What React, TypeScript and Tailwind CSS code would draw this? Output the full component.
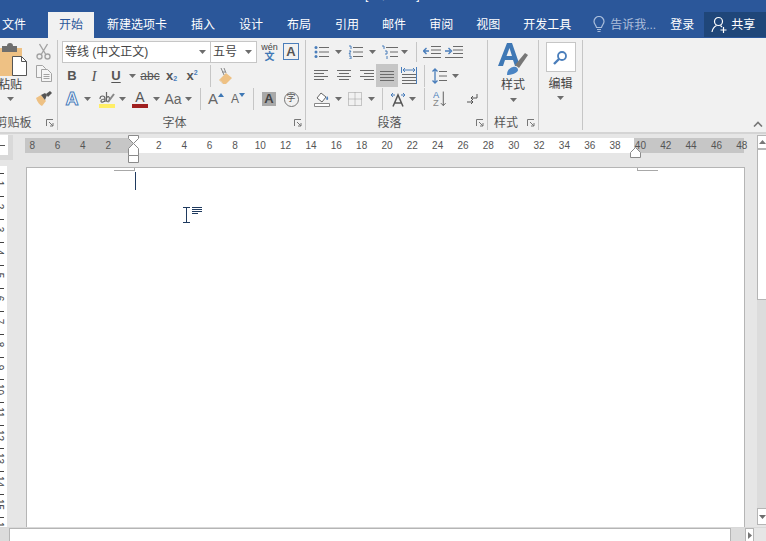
import type { ReactNode } from 'react';

const BLUE = '#4a7ebb';
const GRAY = '#6b6b6b';

function Caret({ className = '' }: { className?: string }) {
  return (
    <svg width="7" height="4" viewBox="0 0 7 4" className={className}>
      <path d="M0 0h7L3.500 4z" fill="#6d6d6d" />
    </svg>
  );
}

function C({ className = '', children }: { className?: string; children?: ReactNode }) {
  return <div className={`flex items-center justify-center shrink-0 ${className}`}>{children}</div>;
}

function Sep({ className = '' }: { className?: string }) {
  return <div className={`w-px bg-[#c6c6c6] shrink-0 ${className}`} />;
}

function Launcher() {
  return (
    <div className="w-[14px] flex items-center justify-center shrink-0">
      <svg width="8" height="8" viewBox="0 0 8 8" fill="none" stroke="#777">
        <path d="M.5 7V.5H7" />
        <path d="M3 3l4 4M7 4v3H4" />
      </svg>
    </div>
  );
}

function GroupLabel({ children }: { children: ReactNode }) {
  return (
    <div className="mt-auto h-[19px] flex items-center">
      <div className="flex-1 text-center text-[12px] leading-[16px] text-[#555] whitespace-nowrap">{children}</div>
      <Launcher />
    </div>
  );
}

function Lines({ d, w = 16, h = 14, children }: { d: string; w?: number; h?: number; children?: ReactNode }) {
  return (
    <svg width={w} height={h} viewBox={`0 0 ${w} ${h}`} fill="none">
      <path d={d} stroke={GRAY} />
      {children}
    </svg>
  );
}

function Tabs() {
  return (
    <div className="h-[26px] flex items-start text-[12px] leading-[26px] text-white whitespace-nowrap">
      <div className="ml-[2px]">文件</div>
      <div className="ml-[22px] h-[26px] px-[11px] bg-[#f1f1f1] text-[#2b579a]">开始</div>
      <div className="ml-[13px] flex gap-[24px]">
        <div>新建选项卡</div>
        <div>插入</div>
        <div>设计</div>
        <div>布局</div>
        <div>引用</div>
        <div className="-ml-px">邮件</div>
        <div className="-ml-px">审阅</div>
        <div className="-ml-px">视图</div>
        <div className="-ml-px">开发工具</div>
      </div>
      <div className="ml-[22px] h-[24px] flex items-center">
        <svg width="12" height="17" viewBox="0 0 12 17" fill="none" stroke="#a9bddb" strokeWidth="1.2">
          <path d="M3.500 11.500C3 9 1 8 1 5.500a5 5 0 0 1 10 0C11 8 9 9 8.500 11.500z" />
          <path d="M4 13.500h4M4.500 15.500h3" />
        </svg>
      </div>
      <div className="ml-[5px] text-[#aebfdb] w-[46px]">告诉我...</div>
      <div className="ml-[14px]">登录</div>
      <div className="ml-[10px] h-[25px] w-[62px] bg-[#1f4679] flex items-center">
        <svg width="17" height="17" viewBox="0 0 17 17" fill="none" stroke="#fff" strokeWidth="1.2" className="ml-[7px]">
          <circle cx="7.500" cy="5.500" r="4" />
          <path d="M1 16c.5-3 2.500-5.500 4.500-6.500M9.500 9.500l1.500 1.500M12.500 11v6M9.500 14h6" />
        </svg>
        <span className="ml-[3px]">共享</span>
      </div>
    </div>
  );
}

function Clipboard() {
  return (
    <div className="-ml-[16px] w-[73px] shrink-0 flex flex-col pt-[3px]">
      <div className="flex">
        <div className="w-[52px] flex flex-col items-center shrink-0">
          <svg width="52" height="34" viewBox="0 0 52 34" className="mt-[2px]">
            <path d="M16 5h22v28H16z" fill="#eec184" />
            <path d="M18 3h5a3 3 0 0 1 6 0h4v6H18z" fill="#6e6e6e" />
            <path d="M28.500 13.500h9l5 5v14h-14z" fill="#fff" stroke="#555" />
            <path d="M37.500 13.500v5h5" fill="none" stroke="#555" />
          </svg>
          <div className="mt-[1px] text-[12px] leading-[14px] text-[#444] whitespace-nowrap">粘贴</div>
          <Caret className="mt-[5px]" />
        </div>
        <div className="w-[15px] shrink-0 flex flex-col items-center">
          <svg width="15" height="17" viewBox="0 0 15 17" fill="none" stroke="#a3a3a3" strokeWidth="1.4" className="mt-[2px]">
            <path d="M3.500 1l6 10M11.500 1l-6 10" />
            <circle cx="3.500" cy="13.500" r="2.500" />
            <circle cx="11.500" cy="13.500" r="2.500" />
          </svg>
          <svg width="16" height="17" viewBox="0 0 16 17" fill="#f5f5f5" stroke="#a3a3a3" className="mt-[5px]">
            <path d="M.5.500h6l3 3v9h-9z" />
            <path d="M5.500 4.500h6l4 4v8h-10z" />
            <path d="M7.500 9.500h6M7.500 11.500h6M7.500 13.500h6" />
          </svg>
          <svg width="16" height="15" viewBox="0 0 16 15" className="mt-[9px]">
            <path d="M0 7l5-3 5 6-4 5C4 14 1 11 0 7z" fill="#eec184" />
            <path d="M5 4l4-2 2 2-2 5z" fill="#555" />
            <path d="M10 3l4-3 2 2-4 4z" fill="#555" />
          </svg>
        </div>
      </div>
      <div className="mt-auto h-[19px] flex items-center">
        <div className="w-[59px] text-center text-[12px] leading-[16px] text-[#555] whitespace-nowrap">剪贴板</div>
        <Launcher />
      </div>
    </div>
  );
}

function FontGroup() {
  return (
    <div className="w-[247px] shrink-0 flex flex-col pt-[3px] text-[#555]">
      <div className="h-[22px] flex">
        <div className="ml-[4px] w-[149px] h-[22px] bg-white border border-[#c6c6c6] flex items-center pl-[2px] pr-[4px] text-[12px] text-[#444] whitespace-nowrap">
          <span className="flex-1">等线 (中文正文)</span>
          <Caret />
        </div>
        <div className="-ml-px w-[47px] h-[22px] bg-white border border-[#c6c6c6] flex items-center pl-[2px] pr-[4px] text-[12px] text-[#444] whitespace-nowrap">
          <span className="flex-1">五号</span>
          <Caret />
        </div>
        <C className="ml-[1px] w-[23px] flex-col leading-none">
          <span className="text-[9px] leading-[9px] text-[#444]">wén</span>
          <span className="text-[10px] leading-[10px] text-[#3f78b5] font-bold">文</span>
        </C>
        <C className="ml-[2px] mt-[2px] w-[16px] h-[17px] border border-[#4a7ebb] text-[13px] font-bold text-[#555]">A</C>
      </div>
      <div className="mt-[3px] h-[20px] flex items-center text-[13px] font-bold">
        <C className="ml-[3px] w-[22px]">B</C>
        <C className="w-[22px] italic font-normal font-['Liberation_Serif'] text-[15px]">I</C>
        <C className="w-[22px] underline underline-offset-2">U</C>
        <C className="w-[10px]"><Caret /></C>
        <C className="ml-[1px] w-[24px] text-[12px] font-normal line-through">abc</C>
        <C className="w-[19px]">x<span className="text-[7px] text-[#4a7ebb] mt-[6px]">2</span></C>
        <C className="ml-[1px] w-[20px]">x<span className="text-[7px] text-[#4a7ebb] -mt-[6px]">2</span></C>
        <Sep className="ml-[8px] h-[22px]" />
        <C className="ml-[4px] w-[22px]">
          <svg width="16" height="18" viewBox="0 0 16 18">
            <path d="M1 13l7-7 6 5-6 6H5z" fill="#eec184" />
            <path d="M2 12l3 5H4z" fill="#ddd" />
            <path d="M3 1l3 7M6 1l2 5M4 5h3" stroke="#888" fill="none" />
          </svg>
        </C>
      </div>
      <div className="mt-[1px] h-[24px] flex items-center">
        <C className="ml-[3px] w-[22px] text-[18px] font-bold text-[#fff] [-webkit-text-stroke:1px_#4a7ebb]">A</C>
        <C className="w-[9px]"><Caret /></C>
        <C className="ml-[3px] w-[23px]">
          <div className="flex flex-col items-center">
            <svg width="16" height="13" viewBox="0 0 16 13" fill="none" stroke="#666" strokeWidth="1.2">
              <path d="M1 8c0-2 1-3 2.500-3S6 6 6 8v3M6 8c-2 0-4 0-4 2s3 1 4-.5" />
              <path d="M7.500 1v9c1 1 3 1 3-2s-2-3-3-1" />
              <path d="M9 11l6-8" stroke="#888" strokeWidth="2" />
            </svg>
            <div className="w-[16px] h-[4px] bg-[#ffee66]" />
          </div>
        </C>
        <C className="w-[9px]"><Caret /></C>
        <C className="ml-[2px] w-[22px]">
          <div className="flex flex-col items-center">
            <span className="text-[14px] leading-[13px] text-[#555]">A</span>
            <div className="w-[16px] h-[4px] bg-[#a02020]" />
          </div>
        </C>
        <C className="w-[10px]"><Caret /></C>
        <C className="ml-[1px] w-[22px] text-[14px] text-[#666]">Aa</C>
        <C className="w-[9px]"><Caret /></C>
        <Sep className="ml-[7px] h-[22px]" />
        <C className="ml-[4px] w-[22px] text-[15px] text-[#666]">A<Tri dir="up" /></C>
        <C className="w-[22px] text-[12px] text-[#666]">A<Tri dir="down" /></C>
        <Sep className="ml-[4px] h-[22px]" />
        <C className="ml-[4px] w-[22px]">
          <div className="w-[14px] h-[14px] bg-[#a9a9a9] flex items-center justify-center text-[13px] font-bold text-[#444]">A</div>
        </C>
        <C className="w-[22px]">
          <div className="w-[15px] h-[15px] rounded-full border border-[#777] flex items-center justify-center text-[9px] text-[#555]">字</div>
        </C>
      </div>
      <GroupLabel>字体</GroupLabel>
    </div>
  );
}

function Tri({ dir }: { dir: 'up' | 'down' }) {
  return (
    <svg width="6" height="4" viewBox="0 0 6 4" className="-mt-[9px]">
      <path d={dir === 'up' ? 'M3 0l3 4H0z' : 'M0 0h6L3 4z'} fill="#3f78b5" />
    </svg>
  );
}

function ParagraphGroup() {
  const rows = 'M0 1.500h14M0 4.500h10M0 7.500h14M0 10.500h10';
  return (
    <div className="w-[181px] shrink-0 flex flex-col pt-[3px]">
      <div className="h-[22px] flex items-center">
        <C className="ml-[8px] w-[15px]">
          <Lines w={15} d="M5 2.500h10M5 7h10M5 11.500h10">
            <circle cx="2" cy="2.500" r="1.500" fill={BLUE} />
            <circle cx="2" cy="7" r="1.500" fill={BLUE} />
            <circle cx="2" cy="11.500" r="1.500" fill={BLUE} />
          </Lines>
        </C>
        <C className="ml-[4px] w-[10px]"><Caret /></C>
        <C className="ml-[5px] w-[15px]">
          <Lines w={15} d="M5 2.500h10M5 7h10M5 11.500h10">
            <path d="M1 1h2v3M1 6h2l-2 3h2M1 11h2v3H1" stroke={BLUE} />
          </Lines>
        </C>
        <C className="ml-[4px] w-[10px]"><Caret /></C>
        <C className="ml-[4px] w-[17px]">
          <Lines w={17} d="M5 2.500h12M9 7h8M9 11.500h8">
            <path d="M1 1h2v3M4 6h2v3H4M6 11v3" stroke={BLUE} />
          </Lines>
        </C>
        <C className="ml-[1px] w-[10px]"><Caret /></C>
        <Sep className="ml-[7px] h-[20px]" />
        <C className="ml-[6px] w-[18px]">
          <Lines w={18} d="M8 1.500h10M8 5h10M8 8.500h10M0 12.500h18">
            <path d="M6 6H1M3.500 3L.5 6l3 3" stroke={BLUE} strokeWidth="1.400" />
          </Lines>
        </C>
        <C className="ml-[4px] w-[18px]">
          <Lines w={18} d="M8 1.500h10M8 5h10M8 8.500h10M0 12.500h18">
            <path d="M0 6h5M3.500 3l3 3-3 3" stroke={BLUE} strokeWidth="1.400" />
          </Lines>
        </C>
      </div>
      <div className="mt-[1px] h-[23px] flex items-center">
        <C className="ml-[8px] w-[16px]"><Lines d={rows} /></C>
        <C className="ml-[6px] w-[16px]"><Lines d="M1 1.500h14M3 4.500h10M1 7.500h14M3 10.500h10" /></C>
        <C className="ml-[6px] w-[16px]"><Lines d="M2 1.500h14M6 4.500h10M2 7.500h14M6 10.500h10" /></C>
        <C className="ml-[2px] w-[22px] h-[23px] bg-[#c6c6c6]"><Lines d="M1 2.500h14M1 5.500h14M1 8.500h14M1 11.500h14" /></C>
        <C className="ml-[3px] w-[16px]">
          <svg width="16" height="18" viewBox="0 0 16 18" fill="none">
            <path d="M1 7.500h14M1 10.500h14M1 13.500h14M1 16.500h14" stroke={GRAY} />
            <path d="M.5 0v6M15.500 0v17M2 3h12M2 3l2-2M2 3l2 2M14 3l-2-2M14 3l-2 2" stroke={BLUE} />
          </svg>
        </C>
        <Sep className="ml-[7px] h-[22px]" />
        <C className="ml-[7px] w-[15px]">
          <svg width="15" height="18" viewBox="0 0 15 18" fill="none">
            <path d="M3 2v14M.5 4.500L3 2l2.500 2.500M.5 13.500L3 16l2.500-2.500" stroke={BLUE} strokeWidth="1.300" />
            <path d="M7 4.500h8M7 9h8M7 13.500h8" stroke={GRAY} />
          </svg>
        </C>
        <C className="ml-[3px] w-[10px]"><Caret /></C>
      </div>
      <div className="mt-[1px] h-[22px] flex items-center">
        <C className="ml-[8px] w-[16px]">
          <svg width="16" height="16" viewBox="0 0 16 16" fill="none">
            <path d="M3 7l4-5 5 4-4 5z" fill="#fff" stroke="#666" />
            <path d="M13 5c2 2 1 4 0 4s-1-2 0-4z" fill={BLUE} />
            <path d="M.5 12.500h15v3H.5z" fill="#fff" stroke="#888" />
          </svg>
        </C>
        <C className="ml-[3px] w-[10px]"><Caret /></C>
        <C className="ml-[5px] w-[14px]">
          <svg width="14" height="14" viewBox="0 0 14 14" fill="none" stroke="#999" strokeDasharray="1 1">
            <path d="M.5.500h13v13H.5zM7 .500v13M.5 7h13" />
          </svg>
        </C>
        <C className="ml-[4px] w-[10px]"><Caret /></C>
        <Sep className="ml-[6px] h-[22px]" />
        <C className="ml-[7px] w-[16px]">
          <svg width="16" height="16" viewBox="0 0 16 16" fill="none">
            <path d="M1 4h4M1 4l2-2M1 4l2 2M15 4h-4M15 4l-2-2M15 4l-2 2" stroke={BLUE} />
            <path d="M3 15.500L8 4l5 11.500M5 12h6" stroke="#555" strokeWidth="1.500" />
          </svg>
        </C>
        <C className="w-[12px]"><Caret /></C>
        <Sep className="ml-[6px] h-[22px]" />
        <C className="ml-[8px] w-[14px]">
          <svg width="15" height="18" viewBox="0 0 15 18" fill="none">
            <text x="0" y="8" fontSize="10" fill={BLUE} fontFamily="Liberation Sans">A</text>
            <text x="0" y="17" fontSize="10" fill="#888" fontFamily="Liberation Sans">Z</text>
            <path d="M11 1v15M8.500 13.500L11 16l2.500-2.500" stroke="#555" />
          </svg>
        </C>
        <C className="ml-[19px] w-[12px]">
          <svg width="12" height="13" viewBox="0 0 12 13" fill="none" stroke="#555">
            <path d="M11 1v4H5M7 3L5 5l2 2M1 9h6M5 7l2 2-2 2" />
          </svg>
        </C>
      </div>
      <GroupLabel>段落</GroupLabel>
    </div>
  );
}

function StylesGroup() {
  return (
    <div className="w-[50px] shrink-0 flex flex-col items-center pt-[3px]">
      <svg width="30" height="32" viewBox="0 0 30 32" className="mt-[2px]">
        <path d="M0 23L9 0h5l8 23h-5l-2-6H7l-2 6zM8.500 13h5.500L11.500 5z" fill="#3f78b5" />
        <path d="M17 22l10-12 3 2-9 13z" fill="#777" />
        <path d="M9 32c0-4 2-7 6-8 3-1 5 1 5 3s-4 5-11 5z" fill="#4a84c4" />
      </svg>
      <div className="mt-[2px] text-[12px] leading-[16px] text-[#444]">样式</div>
      <Caret className="mt-[5px]" />
      <div className="mt-auto w-full"><GroupLabel>样式</GroupLabel></div>
    </div>
  );
}

function EditGroup() {
  return (
    <div className="w-[43px] shrink-0 flex flex-col items-center pt-[4px]">
      <div className="w-[30px] h-[30px] bg-white border border-[#c6c6c6] flex items-center justify-center">
        <svg width="15" height="15" viewBox="0 0 15 15" fill="none" stroke={BLUE} strokeWidth="1.800">
          <circle cx="9" cy="6" r="4" />
          <path d="M6 9l-5 5" strokeWidth="2.400" />
        </svg>
      </div>
      <div className="mt-[4px] text-[12px] leading-[16px] text-[#444]">编辑</div>
      <Caret className="mt-[4px]" />
    </div>
  );
}

function Ruler() {
  const left = [8, 6, 4, 2];
  const right = Array.from({ length: 24 }, (_, i) => (i + 1) * 2);
  return (
    <div className="relative h-[15px] w-[723px] -ml-px flex">
      <div className="w-[108px] bg-[#c6c6c6]" />
      <div className="w-[501px] bg-white" />
      <div className="w-[110px] bg-[#c6c6c6]" />
      <div className="absolute -left-[5.500px] top-0 h-[15px] flex text-[10px] leading-[15px] text-[#555] font-['Liberation_Sans']">
        {left.map((n, i) => (
          <div key={i} className="w-[25.350px] text-center">{n}</div>
        ))}
        <div className="w-[25.350px]" />
        {right.map(n => (
          <div key={n} className="w-[25.350px] text-center">{n}</div>
        ))}
      </div>
      <svg width="12" height="29" viewBox="0 0 12 29" className="absolute left-[103px] -top-[3px]" fill="#fff" stroke="#8a8a8a">
        <path d="M.5.500h10v3l-5 5-5-5z" />
        <path d="M5.500 8.500l5 5v7H.5v-7z" />
        <path d="M.5 20.500h10v7H.5z" />
      </svg>
      <svg width="11" height="11" viewBox="0 0 11 11" className="absolute left-[605px] top-[9px]" fill="#fff" stroke="#8a8a8a">
        <path d="M5.500.500l5 5v5H.5v-5z" />
      </svg>
    </div>
  );
}

function VerticalRuler() {
  const digits = Array.from({ length: 19 }, (_, i) => i + 1);
  return (
    <div className="w-[7px] flex-1 bg-white overflow-hidden pt-[3px]">
      {digits.map(n => (
        <div key={n} className="h-[18.950px] relative">
          <div className="w-[4px] h-px bg-[#444] mt-[4px]" />
          <div className="h-[9px] w-[14px] -ml-[8px] mt-[5px] rotate-90 text-[10px] leading-[9px] text-[#444] text-center font-['Liberation_Sans']">
            {n}
          </div>
        </div>
      ))}
    </div>
  );
}

function Page() {
  return (
    <div className="relative flex-1 w-[719px] bg-white border-l border-r border-t border-[#b5b5b5]">
      <div className="absolute left-[87px] top-0 w-[21px] h-[3px] border-b border-r border-[#a8a8a8]" />
      <div className="absolute left-[610px] top-0 w-[21px] h-[3px] border-b border-l border-[#a8a8a8]" />
      <div className="absolute left-[108px] top-[4px] w-px h-[18px] bg-[#1f3a5f]" />
      <svg width="8" height="16" viewBox="0 0 8 16" className="absolute left-[156px] top-[39px]" fill="none" stroke="#1f3a5f">
        <path d="M0 .500h7M0 15.500h7M3.500 .500v15" />
      </svg>
      <svg width="11" height="8" viewBox="0 0 11 8" className="absolute left-[165px] top-[39px]" fill="none" stroke="#1f3a5f">
        <path d="M0 .500h10M0 2.500h10M0 4.500h10M0 6.500h6" />
      </svg>
    </div>
  );
}

export default function App() {
  return (
    <div className="w-[766px] h-[541px] overflow-hidden flex flex-col bg-[#e6e6e6] font-['Liberation_Sans','Noto_Sans_CJK_SC',sans-serif]">
      <div className="h-[38px] bg-[#2b579a] shrink-0">
        <div className="h-[12px] overflow-hidden">
          <div className="-mt-[12px] text-center text-[12px] leading-[15px] text-white whitespace-nowrap pr-[5px]">
            文档1.docx [兼容模式] - Word
          </div>
        </div>
        <Tabs />
      </div>

      <div className="h-[94px] shrink-0 bg-[#f1f1f1] flex relative">
        <Clipboard />
        <Sep className="my-[2px]" />
        <FontGroup />
        <Sep className="my-[2px]" />
        <ParagraphGroup />
        <Sep className="my-[2px]" />
        <StylesGroup />
        <Sep className="my-[2px]" />
        <EditGroup />
        <Sep className="my-[2px]" />
        <svg width="10" height="6" viewBox="0 0 10 6" fill="none" stroke="#777" strokeWidth="1.600" className="absolute right-[3px] bottom-[5px]">
          <path d="M1 5.500l4-4 4 4" />
        </svg>
      </div>
      <div className="h-[2px] shrink-0 bg-[#d4d4d4]" />

      <div className="flex-1 min-h-0 flex">
        <div className="w-[26px] shrink-0 flex flex-col">
          <div className="mt-[1px] w-[13px] h-[25px] border-r-[5px] border-b-[5px] border-[#d9d9d9]">
            <div className="w-[8px] h-[20px] bg-white flex items-center">
              <div className="w-[5px] h-px bg-[#555]" />
            </div>
          </div>
          <div className="mt-[6px] flex-1 min-h-0 flex flex-col">
            <VerticalRuler />
          </div>
        </div>
        <div className="w-[719px] shrink-0 flex flex-col">
          <div className="mt-[4px]">
            <Ruler />
          </div>
          <div className="mt-[14px] flex-1 flex flex-col">
            <Page />
          </div>
        </div>
        <div className="ml-[12px] w-[9px] shrink-0 flex flex-col mt-[1px]">
          <div className="h-[15px] bg-white border-l border-t border-b-2 border-[#b5b5b5] flex items-center justify-center">
            <svg width="7" height="4" viewBox="0 0 7 4"><path d="M3.500 0L7 4H0z" fill="#777" /></svg>
          </div>
          <div className="h-[150px] bg-white border-l border-b border-[#b5b5b5]" />
          <div className="flex-1 bg-[#dcdcdc]" />
          <div className="h-[17px] bg-white border-l border-t border-b border-[#b5b5b5] flex items-center justify-center">
            <Caret />
          </div>
          <div className="h-[2px]" />
        </div>
      </div>

      <div className="h-[14px] shrink-0 flex border-t border-[#d9d9d9]">
        <div className="w-[9px] bg-[#dcdcdc]" />
        <div className="w-[722px] bg-white border-l border-r border-t border-[#b5b5b5]" />
        <div className="w-[14px] bg-[#dcdcdc]" />
        <div className="w-[9px] bg-white border-t border-r border-l border-[#b5b5b5] flex items-center justify-center">
          <svg width="4" height="7" viewBox="0 0 4 7"><path d="M0 0l4 3.500L0 7z" fill="#777" /></svg>
        </div>
      </div>
    </div>
  );
}
